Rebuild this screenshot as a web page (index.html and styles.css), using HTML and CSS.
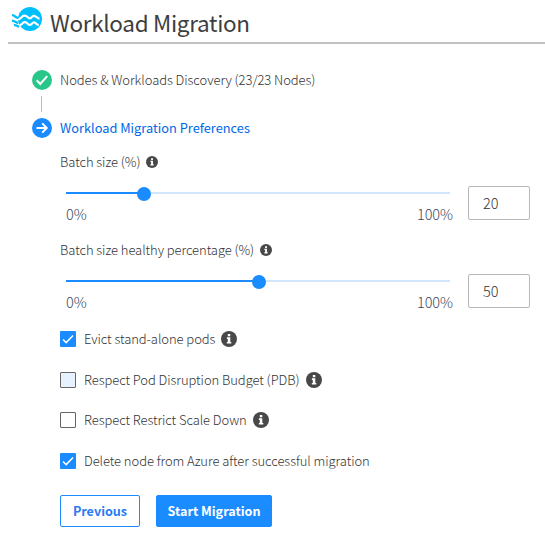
FILE: index.html
```html
<!DOCTYPE html>
<html lang="en">
<head>
<meta charset="utf-8">
<title>Workload Migration</title>
<link rel="stylesheet" href="styles.css">
</head>
<body>
<svg class="defs" width="0" height="0" aria-hidden="true">
  <symbol id="info" viewBox="0 0 16 16">
    <circle cx="8" cy="8" r="8" fill="#484848"/>
    <path d="M6.800 3h2.500v2.200H6.800zM5.900 6.300h3.400v4.600h1v1.600H5.800v-1.600h1V7.900h-.9z" fill="#fff"/>
  </symbol>
  <symbol id="tick" viewBox="0 0 16 16">
    <path d="M3 8.500l3.200 3.100L13 4.600" fill="none" stroke="#fff" stroke-width="1.500"/>
  </symbol>
</svg>
<header class="header">
  <svg class="logo" width="30" height="24" viewBox="0 0 30 24">
    <circle cx="18" cy="12" r="12" fill="#00bfff"/>
    <path d="M5.500 12.500C9 12.500 9.500 8.600 12.500 8.600S15.500 11.300 17.800 11.300 19.500 8.800 22 8.800 25 11.600 27.500 11.600M6 19C9.500 19 10 15.200 12.800 15.200S15.800 18 18 18 19.800 15.400 22 15.400 24.500 18 26.800 18" fill="none" stroke="#fff" stroke-width="2.200"/>
    <path d="M0 8.200C3 8 3.500 11 6.300 11M0 13.800C3 13.600 3.500 15.800 6.300 15.800M2 18.200C4 17.600 5 19.300 7 19.600" fill="none" stroke="#00bfff" stroke-width="2.300"/>
  </svg>
  <h1><span>Workload Migration</span></h1>
</header>
<main class="wizard">
  <div class="step">
    <svg width="20" height="20" viewBox="0 0 20 20"><circle cx="10" cy="10" r="10" fill="#29c68a"/><path d="M4.700 10.300l3.500 3.700 7-7.800" fill="none" stroke="#fff" stroke-width="2"/></svg>
    <span>Nodes &amp; Workloads Discovery (23/23 Nodes)</span>
  </div>
  <div class="connector"></div>
  <div class="step active">
    <svg width="20" height="20" viewBox="0 0 20 20"><circle cx="10" cy="10" r="10" fill="#1a8cff"/><path d="M4.500 10h10M10.200 5.300l4.600 4.700-4.600 4.700" fill="none" stroke="#fff" stroke-width="1.900"/></svg>
    <span>Workload Migration Preferences</span>
  </div>
  <section class="content">
    <div class="field">
      <label class="caption"><span>Batch size (%)</span><svg width="12" height="12"><use href="#info"/></svg></label>
      <div class="control">
        <div class="slider">
          <div class="track"><div class="fill" style="width:78px"><i class="thumb"></i></div></div>
          <div class="scale"><span>0%</span><span>100%</span></div>
        </div>
        <div class="number"><span>20</span></div>
      </div>
    </div>
    <div class="field">
      <label class="caption"><span>Batch size healthy percentage (%)</span><svg width="12" height="12"><use href="#info"/></svg></label>
      <div class="control">
        <div class="slider">
          <div class="track"><div class="fill" style="width:193px"><i class="thumb"></i></div></div>
          <div class="scale"><span>0%</span><span>100%</span></div>
        </div>
        <div class="number"><span>50</span></div>
      </div>
    </div>
    <div class="options">
      <label class="option"><i class="box on"><svg width="16" height="16"><use href="#tick"/></svg></i><span>Evict stand-alone pods</span><svg width="16" height="16"><use href="#info"/></svg></label>
      <label class="option"><i class="box hover"></i><span>Respect Pod Disruption Budget (PDB)</span><svg width="16" height="16"><use href="#info"/></svg></label>
      <label class="option"><i class="box"></i><span>Respect Restrict Scale Down</span><svg width="16" height="16"><use href="#info"/></svg></label>
      <label class="option"><i class="box on"><svg width="16" height="16"><use href="#tick"/></svg></i><span>Delete node from Azure after successful migration</span></label>
    </div>
    <div class="actions">
      <button class="btn"><span>Previous</span></button>
      <button class="btn primary"><span>Start Migration</span></button>
    </div>
  </section>
</main>
</body>
</html>
```
FILE: styles.css
```css
* { box-sizing: border-box; }
body {
  margin: 0;
  background: #fff;
  color: #333;
  font: 300 13px/20px "Noto Sans CJK SC", "Noto Sans", sans-serif;
  letter-spacing: -0.065px;
  overflow: hidden;
}
svg { display: block; flex: none; }
span { white-space: nowrap; }
.defs { display: none; }
.header {
  display: flex;
  gap: 8px;
  height: 44px;
  margin-left: 8px;
  padding: 7px 0 0 4px;
  border-bottom: 2px solid #c1c1c1;
}
h1 { margin: -1px 0 0; font-size: 22.5px; line-height: 32px; font-weight: 400; letter-spacing: -0.32px; color: #3e3e3e; }
.wizard { padding: 26px 0 0 32px; }
.step { display: flex; gap: 8px; height: 20px; }
.active { color: #0068e8; font-size: 12.8px; font-weight: 400; letter-spacing: 0; }
.connector { width: 1px; height: 16px; margin: 6px 0 6px 9px; background: #bbb; }
.content { padding: 14px 15px 0 28px; }
.field { height: 88px; }
.caption { display: flex; align-items: center; gap: 6px; height: 20px; }
.control { display: flex; justify-content: space-between; padding: 14px 0 0 6px; }
.slider { width: 384px; padding-top: 6px; }
.track { height: 2px; background: #d1e6ff; }
.fill { position: relative; height: 2px; background: #1a8cff; }
.thumb { position: absolute; right: -7px; top: -5px; width: 14px; height: 14px; border-radius: 50%; background: #1a8cff; }
.scale { display: flex; justify-content: space-between; margin-right: -3px; padding-top: 10px; font-size: 14.5px; color: #404860; }
.number { width: 62px; height: 34px; padding: 6px 14px; border: 1px solid #b8b8b8; border-radius: 2px; font-size: 14.5px; }
.options { display: grid; grid-template-rows: 41px 40px 41px 20px; padding-top: 1px; }
.option { display: flex; align-items: center; height: 20px; }
.box { width: 16px; height: 16px; margin-right: 8px; border: 1px solid #666; border-radius: 1px; }
.box.on { border: 0; background: #1a8cff; }
.box.hover { background: #e8f2ff; }
.option span + svg { margin-left: 6px; }
.actions { display: flex; gap: 16px; padding-top: 24px; }
.btn {
  width: 80px;
  height: 32px;
  padding: 0;
  border: 1px solid #1a8cff;
  border-radius: 2px;
  background: #fff;
  color: #2b7bf3;
  font: 700 12.6px/20px "Noto Sans CJK SC", sans-serif;
}
.btn.primary { width: 116px; background: #1a8cff; color: #fff; }
```
